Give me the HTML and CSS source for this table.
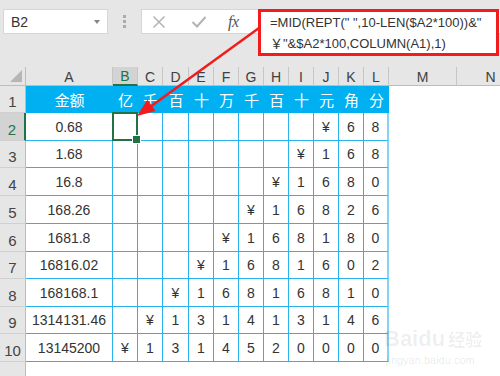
FILE: index.html
```html
<!DOCTYPE html>
<html lang="zh">
<head>
<meta charset="utf-8">
<title>Excel</title>
<link rel="stylesheet" href="styles.css">
</head>
<body>
<div class="toolbar">
  <div class="namebox"><span>B2</span><span class="caret"></span></div>
  <div class="grip"><i></i><i></i><i></i></div>
  <div class="fbar">
    <svg class="ico x" width="14" height="14" viewBox="0 0 14 14"><path d="M1.5 1.5 L12.5 12.5 M12.5 1.5 L1.5 12.5" stroke="#b3b3b3" stroke-width="1.5" fill="none"/></svg>
    <svg class="ico ok" width="16" height="14" viewBox="0 0 16 14"><path d="M1.5 7 L6 11.5 L14.5 2" stroke="#b3b3b3" stroke-width="2" fill="none"/></svg>
    <span class="fx">fx</span>
  </div>
</div>

<div class="formula">=MID(REPT(" ",10-LEN($A2*100))&amp;"<br>￥"&amp;$A2*100,COLUMN(A1),1)</div>

<div class="sheet">
  <div class="corner"><span class="tri"></span></div>
  <div class="ch">A</div><div class="ch sel">B</div><div class="ch">C</div><div class="ch">D</div><div class="ch">E</div><div class="ch">F</div><div class="ch">G</div><div class="ch">H</div><div class="ch">I</div><div class="ch">J</div><div class="ch">K</div><div class="ch">L</div><div class="ch">M</div><div class="ch">N</div>

  <div class="rh">1</div><div class="h">金额</div><div class="h">亿</div><div class="h">千</div><div class="h">百</div><div class="h">十</div><div class="h">万</div><div class="h">千</div><div class="h">百</div><div class="h">十</div><div class="h">元</div><div class="h">角</div><div class="h">分</div><div class="e"></div><div class="e"></div>

  <div class="rh sel">2</div><div class="c">0.68</div><div class="c cur"></div><div class="c"></div><div class="c"></div><div class="c"></div><div class="c"></div><div class="c"></div><div class="c"></div><div class="c"></div><div class="c">¥</div><div class="c">6</div><div class="c l">8</div><div class="e"></div><div class="e"></div>

  <div class="rh">3</div><div class="c">1.68</div><div class="c"></div><div class="c"></div><div class="c"></div><div class="c"></div><div class="c"></div><div class="c"></div><div class="c"></div><div class="c">¥</div><div class="c">1</div><div class="c">6</div><div class="c l">8</div><div class="e"></div><div class="e"></div>

  <div class="rh">4</div><div class="c">16.8</div><div class="c"></div><div class="c"></div><div class="c"></div><div class="c"></div><div class="c"></div><div class="c"></div><div class="c">¥</div><div class="c">1</div><div class="c">6</div><div class="c">8</div><div class="c l">0</div><div class="e"></div><div class="e"></div>

  <div class="rh">5</div><div class="c">168.26</div><div class="c"></div><div class="c"></div><div class="c"></div><div class="c"></div><div class="c"></div><div class="c">¥</div><div class="c">1</div><div class="c">6</div><div class="c">8</div><div class="c">2</div><div class="c l">6</div><div class="e"></div><div class="e"></div>

  <div class="rh">6</div><div class="c">1681.8</div><div class="c"></div><div class="c"></div><div class="c"></div><div class="c"></div><div class="c">¥</div><div class="c">1</div><div class="c">6</div><div class="c">8</div><div class="c">1</div><div class="c">8</div><div class="c l">0</div><div class="e"></div><div class="e"></div>

  <div class="rh">7</div><div class="c">16816.02</div><div class="c"></div><div class="c"></div><div class="c"></div><div class="c">¥</div><div class="c">1</div><div class="c">6</div><div class="c">8</div><div class="c">1</div><div class="c">6</div><div class="c">0</div><div class="c l">2</div><div class="e"></div><div class="e"></div>

  <div class="rh">8</div><div class="c">168168.1</div><div class="c"></div><div class="c"></div><div class="c">¥</div><div class="c">1</div><div class="c">6</div><div class="c">8</div><div class="c">1</div><div class="c">6</div><div class="c">8</div><div class="c">1</div><div class="c l">0</div><div class="e"></div><div class="e"></div>

  <div class="rh">9</div><div class="c">1314131.46</div><div class="c"></div><div class="c">¥</div><div class="c">1</div><div class="c">3</div><div class="c">1</div><div class="c">4</div><div class="c">1</div><div class="c">3</div><div class="c">1</div><div class="c">4</div><div class="c l">6</div><div class="e"></div><div class="e"></div>

  <div class="rh">10</div><div class="c">13145200</div><div class="c">¥</div><div class="c">1</div><div class="c">3</div><div class="c">1</div><div class="c">4</div><div class="c">5</div><div class="c">2</div><div class="c">0</div><div class="c">0</div><div class="c">0</div><div class="c l">0</div><div class="e"></div><div class="e"></div>

  <div class="rh last"></div><div class="e"></div><div class="e"></div><div class="e"></div><div class="e"></div><div class="e"></div><div class="e"></div><div class="e"></div><div class="e"></div><div class="e"></div><div class="e"></div><div class="e"></div><div class="e"></div><div class="e"></div><div class="e"></div>
</div>

<svg class="arrow" width="500" height="376" viewBox="0 0 500 376">
  <line x1="259" y1="28" x2="150" y2="107" stroke="#f21c1c" stroke-width="2.5"/>
  <polygon points="137,116 155.6,111 147.4,99.8" fill="#f21c1c"/>
</svg>

<div class="watermark">
  <div class="wm-top"><span>Bai</span><span class="paw">du</span><span class="cn">经验</span></div>
  <div class="wm-url">jingyan.baidu.com</div>
</div>
</body>
</html>
```

FILE: styles.css
```css
* { box-sizing: border-box; margin: 0; padding: 0; }
html, body { width: 500px; height: 376px; overflow: hidden; }
body {
  background: #fff;
  font-family: "Liberation Sans", Arial, "Noto Sans CJK SC", sans-serif;
  color: #333;
  position: relative;
}

/* top formula toolbar */
.toolbar {
  height: 67px;
  background: #e6e6e6;
  display: flex;
  align-items: flex-start;
  padding: 9px 0 0 3px;
}
.namebox {
  width: 105px;
  height: 25px;
  background: #fff;
  border: 1px solid #d6d6d6;
  display: flex;
  align-items: center;
  justify-content: space-between;
  padding: 0 7px 0 7px;
  font-size: 14px;
  color: #333;
}
.caret {
  width: 0; height: 0;
  border-left: 3.5px solid transparent;
  border-right: 3.5px solid transparent;
  border-top: 4px solid #858585;
}
.grip {
  width: 33px;
  height: 25px;
  display: flex;
  flex-direction: column;
  align-items: center;
  justify-content: center;
  gap: 2px;
}
.grip i { display: block; width: 3px; height: 3px; background: #ababab; }
.fbar {
  flex: 1;
  height: 25px;
  background: #fff;
  border: 1px solid #d6d6d6;
  border-right: none;
  display: flex;
  align-items: center;
  padding-left: 10px;
}
.ico.x { margin-right: 25px; }
.ico.ok { margin-right: 21px; }
.fx {
  font-family: "Liberation Serif", "DejaVu Serif", serif;
  font-style: italic;
  font-size: 16px;
  color: #555;
  letter-spacing: -0.5px;
}

/* red annotation box with the formula */
.formula {
  position: absolute;
  left: 258px;
  top: 9px;
  width: 241px;
  height: 47px;
  border: 3px solid #f21c1c;
  background: #fff;
  padding: 0 0 0 9px;
  font-size: 13px;
  line-height: 21px;
  color: #333;
  white-space: nowrap;
}

/* spreadsheet grid */
.sheet {
  display: grid;
  grid-template-columns: 26px 87px 25px 25px 26px 25px 25px 25px 25px 25px 25px 25px 25px 68px 68px;
  grid-template-rows: 19px 27px 28px 27px 28px 28px 28px 27px 28px 27px 28px 14px;
  width: 525px;
}
.sheet > div {
  display: flex;
  align-items: center;
  justify-content: center;
}
.corner {
  background: #e6e6e6;
  border-right: 1px solid #bdbdbd;
  border-bottom: 1px solid #bdbdbd;
  justify-content: flex-end !important;
  align-items: flex-end !important;
  padding: 0 3px 3px 0;
}
.tri {
  width: 0; height: 0;
  border-left: 12px solid transparent;
  border-bottom: 12px solid #b6b6b6;
}
.ch {
  background: #e6e6e6;
  border-right: 1px solid #c6c6c6;
  border-bottom: 1px solid #bdbdbd;
  font-size: 14px;
  color: #404040;
  padding-top: 1px;
}
.ch.sel {
  background: #d3d3d3;
  color: #217346;
  border-bottom: 2px solid #217346;
}
.rh {
  background: #e6e6e6;
  border-right: 1px solid #bdbdbd;
  border-bottom: 1px solid #d0d0d0;
  font-size: 15px;
  color: #444;
  align-items: flex-end !important;
  padding-bottom: 2px;
}
.rh.sel {
  background: #d3d3d3;
  color: #217346;
  border-right: 2px solid #217346;
}
.rh.last { border-bottom: none; }
.h {
  background: #00b0f0;
  color: #fff;
  font-family: "Noto Sans CJK SC", sans-serif;
  font-size: 15px;
}
.c {
  background: #fff;
  border-right: 1px solid #2ab4ee;
  border-bottom: 1px solid #2ab4ee;
  font-size: 14px;
  color: #333;
}
.c.l { border-right: 2px solid #86d3f4; }
.e { background: #fff; }

.cur { position: relative; }
.cur::before {
  content: "";
  position: absolute;
  left: -1px; top: -1px; right: -1px; bottom: -1px;
  border: 2px solid #217346;
}
.cur::after {
  content: "";
  position: absolute;
  right: -4px; bottom: -4px;
  width: 7px; height: 7px;
  background: #217346;
  border: 1px solid #fff;
}

/* arrow annotation */
.arrow {
  position: absolute;
  left: 0; top: 0;
  pointer-events: none;
}

/* faint watermark */
.watermark {
  position: absolute;
  left: 384px;
  top: 326px;
  color: rgba(0, 0, 0, 0.07);
  pointer-events: none;
}
.wm-top {
  font-family: "Liberation Sans", sans-serif;
  font-weight: bold;
  font-size: 22px;
  line-height: 26px;
  display: flex;
  align-items: flex-end;
}
.wm-top .cn {
  font-family: "Noto Sans CJK SC", sans-serif;
  font-size: 17px;
  margin-left: 3px;
}
.wm-url {
  font-size: 11px;
  line-height: 16px;
  padding-left: 2px;
  color: rgba(0, 0, 0, 0.1);
}
```
